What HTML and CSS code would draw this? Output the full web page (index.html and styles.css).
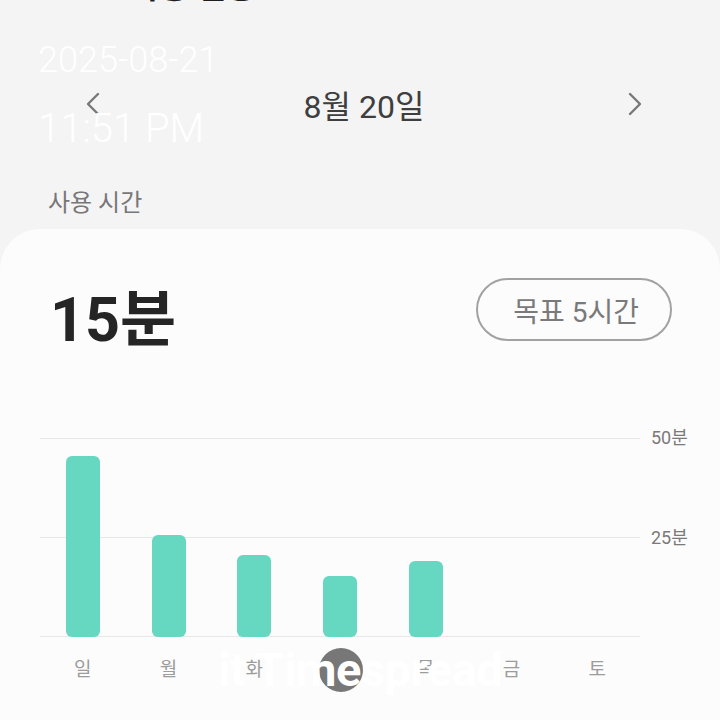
FILE: index.html
```html
<!DOCTYPE html>
<html lang="ko">
<head>
    <meta charset="UTF-8">
    <meta name="viewport" content="width=device-width, initial-scale=1.0">
    <title>사용 현황</title>
    <link rel="stylesheet" href="styles.css">
</head>
<body>

<header class="appbar">
    <span class="back">←</span>
    <h1>사용 현황</h1>
</header>

<nav class="date-nav">
    <svg class="chev" width="26" height="26" viewBox="0 0 26 26"><path d="M18 3 L8 13 L18 23"/></svg>
    <span class="date">8월 20일</span>
    <svg class="chev" width="26" height="26" viewBox="0 0 26 26"><path d="M8 3 L18 13 L8 23"/></svg>
</nav>

<p class="section-label">사용 시간</p>

<section class="card">
    <div class="summary">
        <div class="total">15분</div>
        <button class="goal">목표 5시간</button>
    </div>

    <div class="chart">
        <div class="plot">
            <div class="bar" style="height: 181px"></div>
            <div class="bar" style="height: 102px"></div>
            <div class="bar" style="height: 82px"></div>
            <div class="bar" style="height: 61px"></div>
            <div class="bar" style="height: 76px"></div>
            <div class="bar empty"></div>
            <div class="bar empty"></div>
        </div>
        <div class="axis">
            <span>50분</span>
            <span>25분</span>
        </div>
        <div class="days">
            <span>일</span><span>월</span><span>화</span><span>수</span><span>목</span><span>금</span><span>토</span>
        </div>
    </div>
</section>

<div class="stamp">
    <div class="stamp-date">2025-08-21</div>
    <div class="stamp-time">11:51 PM</div>
</div>

<div class="watermark">
    <span class="wm-dot"></span>
    <span class="wm-text">it Timespread</span>
</div>

</body>
</html>
```

FILE: styles.css
```css
body { margin: 0; width: 720px; height: 720px; overflow: hidden; background: #f4f4f4; font-family: Roboto, "Noto Sans CJK KR", sans-serif; }

.appbar { display: flex; align-items: center; gap: 40px; height: 40px; margin-top: -33px; padding-left: 60px; color: #1e1e1e; }
.appbar h1 { margin: 0; font-size: 32px; font-weight: 700; line-height: 40px; }
.back { font-size: 30px; line-height: 40px; }

.date-nav { display: flex; align-items: center; justify-content: space-between; height: 50px; margin-top: 72px; padding: 0 72px 0 80px; }
.chev path { fill: none; stroke: #777; stroke-width: 2.4; stroke-linecap: round; stroke-linejoin: round; }
.date { font-size: 32px; font-weight: 400; color: #3e3e3e; }

.section-label { margin: 60px 0 0 48px; font-size: 24px; line-height: 28px; font-weight: 400; color: #777; }

.card { margin-top: 12px; height: 500px; background: #fcfcfc; border-radius: 40px 40px 0 0; padding-top: 49px; }

.summary { display: flex; justify-content: space-between; align-items: flex-start; padding: 0 48px 0 50px; }
.total { margin-top: 12px; font-size: 61px; line-height: 60px; font-weight: 700; color: #252525; }
.goal { height: 63px; padding: 0 31px 0 35px; background: transparent; border: 2px solid #a2a2a2; border-radius: 32px; font-family: inherit; font-size: 28px; font-weight: 400; color: #7a7a7a; }

.chart { display: grid; grid-template-columns: 600px 80px; margin-top: 88px; padding-left: 40px; }
.plot { height: 199px; display: grid; grid-template-columns: repeat(7, 1fr); align-items: end; justify-items: center;
    background:
        linear-gradient(#e8e8e8, #e8e8e8) 0 0 / 100% 1px no-repeat,
        linear-gradient(#e8e8e8, #e8e8e8) 0 99px / 100% 1px no-repeat,
        linear-gradient(#e8e8e8, #e8e8e8) 0 198px / 100% 1px no-repeat; }
.bar { width: 34px; background: #66d7c0; border-radius: 6px; }
.bar.empty { height: 0; }

.axis { display: flex; flex-direction: column; gap: 80px; margin-top: -10px; padding-left: 11px; font-size: 18px; line-height: 20px; color: #7a7a7a; }

.days { display: grid; grid-template-columns: repeat(7, 1fr); margin-top: 20px; justify-items: center; font-size: 19px; line-height: 26px; color: #9c9c9c; }

.stamp { position: absolute; top: 38px; left: 38px; color: #fff; font-weight: 300; }
.stamp-date { font-size: 36px; line-height: 44px; }
.stamp-time { margin-top: 22px; font-size: 40px; line-height: 50px; }

.watermark { position: absolute; top: 644px; left: 218px; }
.wm-dot { position: absolute; top: 4px; left: 101px; width: 44px; height: 44px; border-radius: 50%; background: #777; }
.wm-text { position: relative; font-size: 47px; line-height: 52px; font-weight: 700; color: #fff; letter-spacing: -0.5px; }
```
